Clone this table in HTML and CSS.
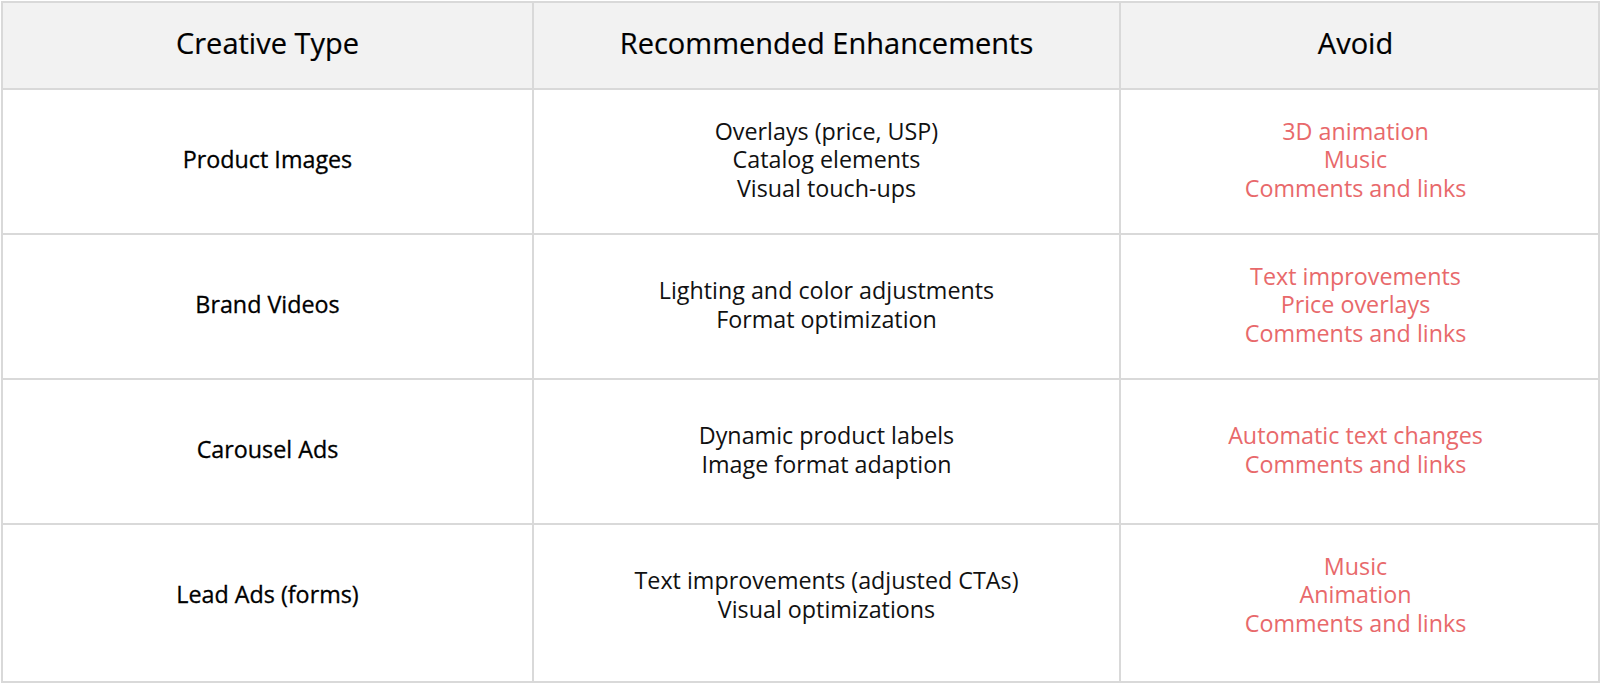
FILE: index.html
```html
<!DOCTYPE html>
<html>
<head>
<meta charset="utf-8">
<link rel="stylesheet" href="styles.css">
</head>
<body>
<table class="grid">
  <colgroup>
    <col class="c1"><col class="c2"><col class="c3">
  </colgroup>
  <thead>
    <tr class="head"><th>Creative Type</th><th>Recommended Enhancements</th><th class="avoid-head">Avoid</th></tr>
  </thead>
  <tbody>
    <tr class="row">
      <td class="type">Product Images</td>
      <td>Overlays (price, USP)<br>Catalog elements<br>Visual touch-ups</td>
      <td class="avoid">3D animation<br>Music<br>Comments and links</td>
    </tr>
    <tr class="row">
      <td class="type">Brand Videos</td>
      <td>Lighting and color adjustments<br>Format optimization</td>
      <td class="avoid">Text improvements<br>Price overlays<br>Comments and links</td>
    </tr>
    <tr class="row">
      <td class="type">Carousel Ads</td>
      <td>Dynamic product labels<br>Image format adaption</td>
      <td class="avoid">Automatic text changes<br>Comments and links</td>
    </tr>
    <tr class="row last">
      <td class="type">Lead Ads (forms)</td>
      <td>Text improvements (adjusted CTAs)<br>Visual optimizations</td>
      <td class="avoid">Music<br>Animation<br>Comments and links</td>
    </tr>
  </tbody>
</table>
</body>
</html>
```
FILE: styles.css
```css
html, body {
  margin: 0;
  padding: 0;
  background: #ffffff;
}
body {
  padding: 1px;
  font-family: "Open Sans", "Liberation Sans", sans-serif;
  color: #111;
}
.grid {
  width: 1597px;
  border-collapse: collapse;
  table-layout: fixed;
}
.c1 { width: 531px; }
.c2 { width: 587px; }
.c3 { width: 479px; }
.grid th, .grid td {
  border: 2px solid #d9d9d9;
  text-align: center;
  vertical-align: middle;
  padding: 0 10px;
}
.head { height: 87px; }
.head th {
  background: #f2f2f2;
  font-weight: 500;
  font-size: 29px;
  line-height: 34px;
  padding-bottom: 6px;
  color: #000;
  -webkit-text-stroke: 0.2px #000;
}
.row { height: 145px; }
.row td {
  font-size: 23.3px;
  line-height: 28.5px;
  padding-bottom: 4px;
  color: #111;
}
.row.last { height: 158px; }
.row.last td { padding-bottom: 17px; }
.row td.type {
  font-weight: 500;
  color: #000;
  -webkit-text-stroke: 0.3px #000;
}
.grid .avoid-head,
.row td.avoid {
  padding-left: 6px;
  padding-right: 14px;
}
.row td.avoid {
  color: #e8696b;
}
```
